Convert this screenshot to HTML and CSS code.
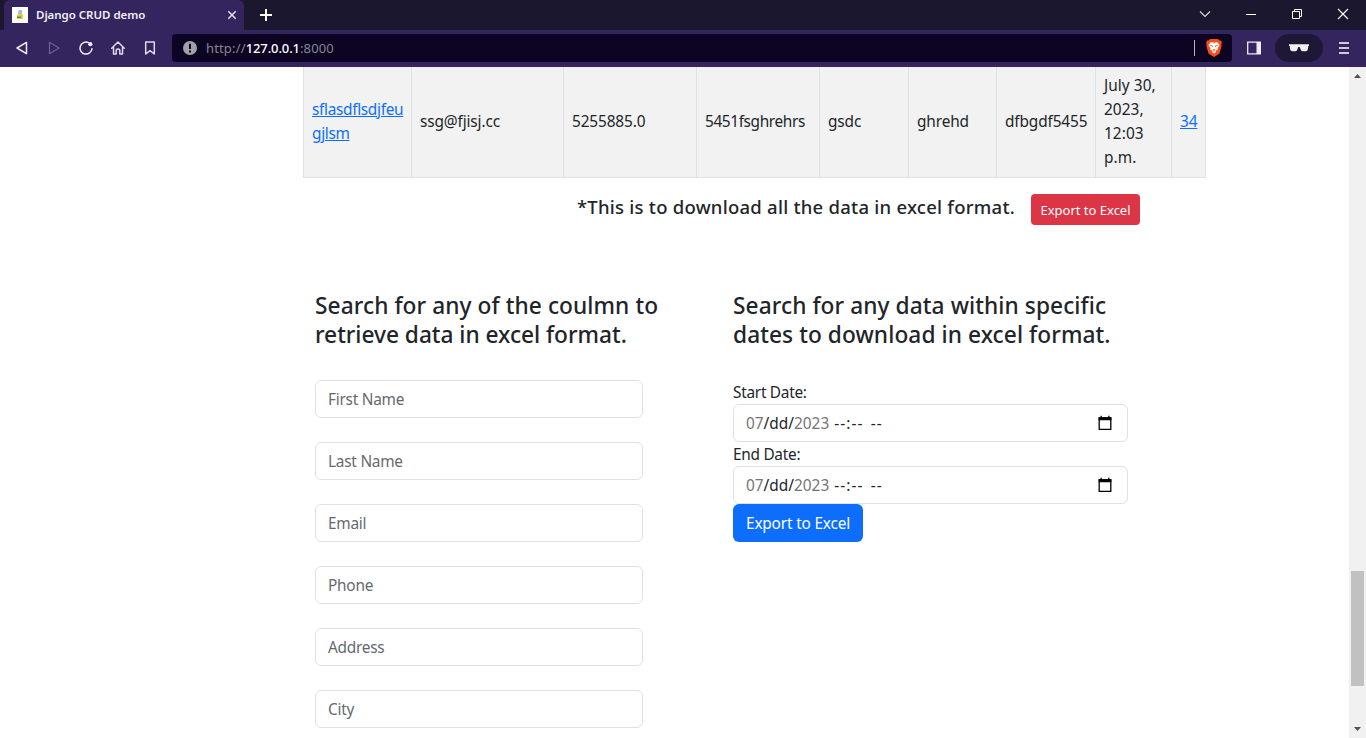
FILE: index.html
```html
<!DOCTYPE html>
<html lang="en">
<head>
<meta charset="utf-8">
<title>Django CRUD demo</title>
<link rel="stylesheet" href="styles.css">
</head>
<body>
<header class="browser">
  <div class="tabstrip">
    <div class="tab">
      <svg class="favicon" width="16" height="16" viewBox="0 0 16 16"><path fill="#fff" d="M0 0h16v16H0z"/><path fill="#a9bdd2" d="M7 3h3v4H6V5z"/><path fill="#f4c62e" d="M5 8l2-1h3l1 1v4H5z"/><path fill="#4b8f62" d="M5 9.500h4V11H5z"/></svg>
      <span class="tab-title">Django CRUD demo</span>
      <svg class="tab-close" width="10" height="10" viewBox="0 0 10 10"><path d="M1.3 1.3l7.4 7.4M8.7 1.3L1.3 8.7" stroke="#e8e5f0" stroke-width="1.5"/></svg>
    </div>
    <svg class="new-tab" width="12" height="12" viewBox="0 0 12 12"><path d="M6 0v12M0 6h12" stroke="#fff" stroke-width="2"/></svg>
    <div class="window-controls">
      <svg width="12" height="12" viewBox="0 0 12 12"><path d="M1 3.5l5 5 5-5" fill="none" stroke="#ddd" stroke-width="1.1"/></svg>
      <svg width="12" height="12" viewBox="0 0 12 12"><path d="M1 6.5h10" stroke="#fff"/></svg>
      <svg width="12" height="12" viewBox="0 0 12 12"><path d="M1.5 3.5h7v7h-7zM3.5 3.5v-2h7v7h-2" fill="none" stroke="#fff"/></svg>
      <svg width="12" height="12" viewBox="0 0 12 12"><path d="M1 1l10 10M11 1L1 11" stroke="#fff" stroke-width="1.1"/></svg>
    </div>
  </div>
  <div class="toolbar">
    <div class="nav">
      <svg width="16" height="16" viewBox="0 0 16 16"><path d="M12.5 2.3v11.4L3 8z" fill="none" stroke="#eeecf4" stroke-width="1.5" stroke-linejoin="round"/></svg>
      <svg width="16" height="16" viewBox="0 0 16 16"><path d="M3.5 2.3v11.4L13 8z" fill="none" stroke="#6c6090" stroke-width="1.3" stroke-linejoin="round"/></svg>
      <svg width="16" height="16" viewBox="0 0 16 16"><path d="M10.5 2.6A6 6 0 1 0 14 8.7" fill="none" stroke="#eeecf4" stroke-width="1.5" stroke-linecap="round"/><circle cx="12.3" cy="4.2" r="2.1" fill="#eeecf4"/></svg>
      <svg width="16" height="16" viewBox="0 0 16 16"><path d="M1.7 8.2L8 2l6.3 6.2M3.5 7v7h2.7v-3.2q0-1.7 1.8-1.7t1.8 1.7V14h2.7V7" fill="none" stroke="#dedae8" stroke-width="1.5" stroke-linejoin="round" stroke-linecap="round"/></svg>
      <svg width="16" height="16" viewBox="0 0 16 16"><path d="M3.7 2h8.6v12L8 10.7 3.7 14z" fill="none" stroke="#dedae8" stroke-width="1.5" stroke-linejoin="round"/></svg>
    </div>
    <div class="address">
      <svg width="14" height="14" viewBox="0 0 14 14"><circle cx="7" cy="7" r="7" fill="#9fa1a6"/><path d="M6 2.8h2V8H6zM6 9.4h2v2H6z" fill="#0d0423"/></svg>
      <span class="url">http://<b>127.0.0.1</b>:8000</span>
      <i class="divider"></i>
      <svg width="16" height="18" viewBox="0 0 16 18"><path fill="#fb4e16" d="M4 0h8l1.4 1.5 1.5-.1 1 2.4-.6 1.4.3 1.5-2.1 7.7L8 18l-5.5-3.6L.4 6.700l.3-1.500L.1 3.800l1-2.400 1.500.1z"/><path fill="#fff" d="M5 3l3 .7L11 3l2.500 3-2 3.500.3 1.400-2 .7.200 1.400L8 14.500 6 13l.2-1.400-2-.7.3-1.400-2-3.500z"/><path d="M4.300 6.400l2.300.5-.5 1.300M11.700 6.400l-2.300.5.5 1.300M6.700 10.200L8 11l1.300-.8M6.500 12.200L8 11.700l1.500.5" fill="none" stroke="#fb4e16" stroke-width=".8"/></svg>
    </div>
    <svg class="sidebar-icon" width="14" height="14" viewBox="0 0 14 14"><path d="M.7 1.2h12.6v11.6H.7z" fill="none" stroke="#eeecf4" stroke-width="1.3"/><path d="M9.5 1h4v12h-4z" fill="#eeecf4"/></svg>
    <div class="private">
      <svg width="20" height="8" viewBox="0 0 20 8"><path fill="#f1f1f1" d="M0 .3h20V2h-.7l-.5 3.600q-.3 1.700-2 1.700h-3.200q-1.500 0-2-1.700L10.700 3H9.300l-.9 2.600q-.5 1.700-2 1.700H3.200q-1.700 0-2-1.700L.7 2H0z"/></svg>
    </div>
    <svg class="menu-icon" width="10" height="12" viewBox="0 0 10 12"><path d="M0 1h10M0 6h10M0 11h10" stroke="#d0cbdc" stroke-width="2"/></svg>
  </div>
</header>
<div class="viewport">
  <main class="page">
    <table class="records">
      <colgroup><col class="c-name"><col class="c-mail"><col class="c-phone"><col class="c-address"><col class="c-city"><col class="c-state"><col class="c-zip"><col class="c-date"><col class="c-id"></colgroup>
      <tr>
        <td class="name"><a>sflasdflsdjfeu<br>gjlsm</a></td>
        <td>ssg@fjisj.cc</td>
        <td>5255885.0</td>
        <td class="addr">5451fsghrehrs</td>
        <td>gsdc</td>
        <td>ghrehd</td>
        <td>dfbgdf5455</td>
        <td class="date">July 30,<br>2023,<br>12:03<br>p.m.</td>
        <td><a>34</a></td>
      </tr>
    </table>
    <div class="export-all">
      <h5>*This is to download all the data in excel format.</h5>
      <button class="btn btn-danger">Export to Excel</button>
    </div>
    <div class="search">
      <section class="by-column">
        <h4>Search for any of the coulmn to<br><span class="tight">retrieve data in excel format.</span></h4>
        <form class="fields">
          <input class="control" placeholder="First Name">
          <input class="control" placeholder="Last Name">
          <input class="control" placeholder="Email">
          <input class="control" placeholder="Phone">
          <input class="control" placeholder="Address">
          <input class="control" placeholder="City">
        </form>
      </section>
      <section class="by-date">
        <h4>Search for any data within specific<br>dates to download in excel format.</h4>
        <label>Start Date:</label>
        <div class="control date-control">
          <span class="date-text"><i>07</i>/dd/<i>2023</i></span><span class="time">--:--</span><span class="time meridiem">--</span>
          <svg width="14" height="16" viewBox="0 0 14 16"><path d="M1.200 3h11.600v11.300H1.200z" fill="none" stroke="#000" stroke-width="1.300"/><path d="M.6 2.300h12.800v3H.6zM2.500.8h1.300v2H2.500zM10.200.8h1.300v2h-1.300z"/></svg>
        </div>
        <label>End Date:</label>
        <div class="control date-control">
          <span class="date-text"><i>07</i>/dd/<i>2023</i></span><span class="time">--:--</span><span class="time meridiem">--</span>
          <svg width="14" height="16" viewBox="0 0 14 16"><path d="M1.200 3h11.600v11.300H1.200z" fill="none" stroke="#000" stroke-width="1.300"/><path d="M.6 2.300h12.800v3H.6zM2.500.8h1.300v2H2.500zM10.200.8h1.300v2h-1.300z"/></svg>
        </div>
        <button class="btn btn-primary">Export to Excel</button>
      </section>
    </div>
  </main>
  <aside class="scrollbar">
    <svg width="7" height="4" viewBox="0 0 7 4"><path d="M0 4L3.500 0 7 4z" fill="#505050"/></svg>
    <div class="thumb"></div>
    <svg width="7" height="4" viewBox="0 0 7 4"><path d="M0 0h7L3.500 4z" fill="#505050"/></svg>
  </aside>
</div>
</body>
</html>
```
FILE: styles.css
```css
* { box-sizing: border-box; }
body {
  margin: 0;
  height: 738px;
  overflow: hidden;
  display: flex;
  flex-direction: column;
  font: 400 15.400px/24px "Noto Sans", "Open Sans", sans-serif;
  color: #212529;
  background: #fff;
}
svg { display: block; flex: none; }
h4, h5 { margin: 0; font-weight: 500; }

/* Browser frame */
.browser { flex: none; height: 67px; background: #34255f; }
.tabstrip { display: flex; align-items: center; height: 30px; padding-left: 4px; background: #1b172e; }
.tab {
  display: flex; align-items: center;
  width: 240px; height: 30px; padding: 0 7px 0 8px;
  border-radius: 6px 6px 0 0; background: #34255f; color: #f0eef5;
}
.tab-title { flex: 1; margin-left: 8px; font-size: 11.500px; font-weight: 600; letter-spacing: -0.030px; white-space: nowrap; }
.new-tab { margin-left: 16px; }
.window-controls { display: flex; gap: 34px; margin-left: auto; padding: 0 17px 2px 0; }
.toolbar { display: flex; align-items: center; height: 36px; }
.nav { display: flex; gap: 16px; padding-left: 14px; }
.address {
  display: flex; align-items: center;
  width: 1060px; height: 28px; margin-left: 14px; padding: 0 10px 0 11px;
  border-radius: 4px; background: #0d0423; color: #88868f;
}
.url { flex: 1; margin-left: 9px; font-size: 13px; letter-spacing: 0.150px; }
.url b { font-weight: 500; color: #fff; letter-spacing: -0.100px; }
.divider { width: 1px; height: 16px; margin-right: 11px; background: #b8b5c0; }
.sidebar-icon { margin-left: 15px; }
.private {
  display: flex; align-items: center; justify-content: center;
  width: 48px; height: 28px; margin-left: 14px; border-radius: 14px; background: #1e1735;
}
.menu-icon { margin-left: 16px; }

/* Visible part of the scrolled page */
.viewport { flex: 1; display: flex; min-height: 0; overflow: hidden; }
.page { flex: 1; min-width: 0; padding-left: 303px; overflow: hidden; }
.records { width: 903px; height: 111px; table-layout: fixed; border-collapse: collapse; background: #f2f2f2; }
.records td {
  border: 1px solid #dee2e6; border-top: 0; padding: 7px 0 7px 8px;
  letter-spacing: -0.130px; white-space: nowrap;
}
.c-name { width: 108px; } .c-mail { width: 152px; } .c-phone { width: 133px; }
.c-address { width: 123px; } .c-city { width: 89px; } .c-state { width: 88px; }
.c-zip { width: 99px; } .c-date { width: 76px; } .c-id { width: 34px; }
.records .name { letter-spacing: -0.320px; }
.records .addr { letter-spacing: -0.380px; }
.records .date { letter-spacing: 0.050px; }
.records a { color: #0d6efd; text-decoration: underline; }

.export-all { display: flex; justify-content: flex-end; align-items: flex-start; width: 837px; height: 104px; padding-top: 16px; }
.export-all h5 { margin-right: 16px; font-size: 18.500px; line-height: 26px; letter-spacing: 0.245px; white-space: nowrap; }
.btn { border: 0; color: #fff; font-family: inherit; font-weight: 400; white-space: nowrap; padding: 0; }
.btn-danger { width: 109px; height: 31px; border-radius: 4px; background: #dc3545; font-size: 13px; }
.btn-primary { display: block; width: 130px; height: 38px; border-radius: 6px; background: #0d6efd; font-size: 15.400px; letter-spacing: -0.180px; }

.search { display: flex; padding: 9px 0 0 12px; }
.by-column { width: 418px; }
.by-date { width: 395px; }
.search h4 { height: 58px; font-size: 22.700px; line-height: 29px; letter-spacing: 0.080px; white-space: nowrap; }
.search .tight { letter-spacing: -0.020px; }
.fields { display: flex; flex-direction: column; gap: 24px; width: 328px; margin-top: 31px; }
.control {
  width: 100%; height: 38px; padding: 1px 12px 0;
  border: 1px solid #dee2e6; border-radius: 6px; background: #fff;
  color: #212529; font: 400 15.400px/24px "Noto Sans", "Open Sans", sans-serif;
  letter-spacing: -0.250px;
}
.control::placeholder { color: #65696e; opacity: 1; }
.by-date label { display: block; height: 24px; padding-top: 1px; letter-spacing: -0.280px; }
.by-date h4 + label { margin-top: 31px; }
.date-control { display: flex; align-items: center; padding: 0 15px 0 12px; }
.date-control span { padding-top: 2px; }
.date-text { letter-spacing: 0; }
.date-text i { font-style: normal; color: #757575; }
.date-control .time { margin-left: 5px; letter-spacing: 1.100px; }
.date-control .meridiem { margin-left: 7px; }
.date-control svg { margin-left: auto; }

.scrollbar {
  display: flex; flex-direction: column; align-items: center;
  width: 17px; padding: 7px 0; background: #f1f1f1;
}
.thumb { width: 13px; height: 115px; margin: 493px 0 auto; background: #c1c1c1; }
```
